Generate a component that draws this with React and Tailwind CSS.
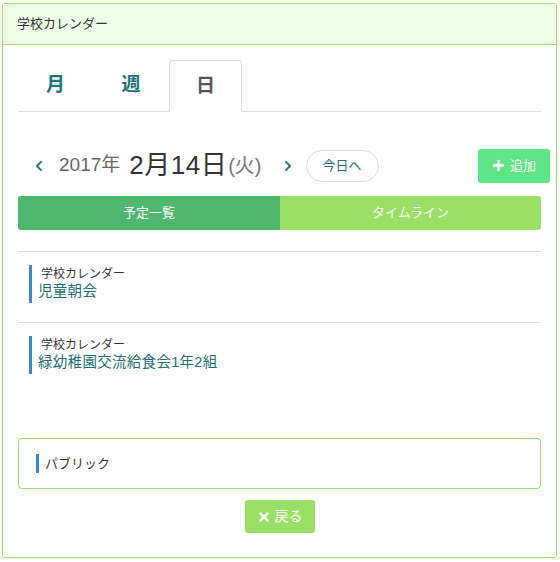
import React from "react";
import { FaChevronLeft, FaChevronRight, FaPlus, FaTimes } from "react-icons/fa";

const font = { fontFamily: '"Liberation Sans", "Noto Sans CJK JP", sans-serif' };

const events = [
  { calendar: "学校カレンダー", title: "児童朝会" },
  { calendar: "学校カレンダー", title: "緑幼稚園交流給食会1年2組" },
];

const App = () => {
  return (
    <div className="bg-white w-[560px] h-[562px] pt-[3px] pl-[2px]" style={font}>
      <div className="w-[555px] h-[555px] border border-[#9be06b] rounded-[3px] shadow-[0_1px_2px_rgba(0,0,0,0.08)] flex flex-col">
        {/* Header */}
        <div className="h-[41px] bg-[#ecfee7] border-b border-[#9be06b] px-[14px] flex items-center text-[13px] text-[#333]">
          学校カレンダー
        </div>

        <div className="px-[15px] pt-[15px] flex flex-col">
          {/* Tabs */}
          <div className="flex h-[52px] border-b border-[#ddd]">
            <button className="w-[75px] h-full text-[19px] font-bold text-[#1d7479]">月</button>
            <button className="w-[76px] h-full text-[19px] font-bold text-[#1d7479]">週</button>
            <button className="w-[73px] h-[52px] -mb-px text-[19px] font-bold text-[#555] bg-white border border-[#ddd] border-b-white rounded-t">
              日
            </button>
          </div>

          {/* Date row */}
          <div className="flex items-center h-[33px] mt-[37px] -mr-[9px]">
            <FaChevronLeft className="text-[#1d7479] text-[12px] ml-[15px]" />
            <span className="ml-[14px] text-[19px] text-[#666]">2017年</span>
            <span className="ml-[9px] text-[26px] text-[#333] tracking-[0.5px]">2月14日</span>
            <span className="ml-[1px] text-[20px] text-[#777]">(火)</span>
            <FaChevronRight className="text-[#1d7479] text-[12px] ml-[20px]" />
            <button className="ml-[12px] h-[32px] px-[16px] rounded-full border border-[#ddd] text-[13px] text-[#1d6f74]">
              今日へ
            </button>
            <button className="ml-auto h-[34px] w-[72px] rounded-[3px] bg-[#5ee585] text-white text-[13px] flex items-center justify-center gap-[5px]">
              <FaPlus className="text-[13px]" />
              追加
            </button>
          </div>

          {/* Segmented control */}
          <div className="flex h-[34px] mt-[14px] rounded-[3px] overflow-hidden text-[13px] text-white">
            <div className="w-[262px] bg-[#4fb66d] flex items-center justify-center">予定一覧</div>
            <div className="flex-1 bg-[#9ae067] flex items-center justify-center">タイムライン</div>
          </div>

          {/* Events */}
          <div className="mt-[21px] border-t border-[#ddd]">
            {events.map((ev, i) => (
              <div key={i} className={`pt-[13px] pb-[19px] pl-[11px] ${i === 0 ? "border-b border-[#ddd]" : ""}`}>
                <div className="border-l-[3px] border-[#3a87c8] pl-[6px] h-[38px] flex flex-col justify-center">
                  <div className="text-[12px] leading-[15px] text-[#333] pl-[3px]">{ev.calendar}</div>
                  <div className="text-[14.5px] leading-[19px] text-[#1d6f74] tracking-[0.3px]">{ev.title}</div>
                </div>
              </div>
            ))}
          </div>

          {/* Public box */}
          <div className="mt-[45px] h-[51px] border border-[#9be06b] rounded-[4px] flex items-center pl-[17px] shadow-[0_1px_2px_rgba(0,0,0,0.06)]">
            <div className="border-l-[3px] border-[#3a87c8] h-[19px] pl-[6px] flex items-center text-[13px] text-[#333]">
              パブリック
            </div>
          </div>

          {/* Back button */}
          <div className="flex justify-center mt-[11px]">
            <button className="h-[33px] w-[70px] rounded-[3px] bg-[#9ae067] text-white text-[14px] flex items-center justify-center gap-[4px]">
              <FaTimes className="text-[14px]" />
              戻る
            </button>
          </div>
        </div>
      </div>
    </div>
  );
};

export default App;
